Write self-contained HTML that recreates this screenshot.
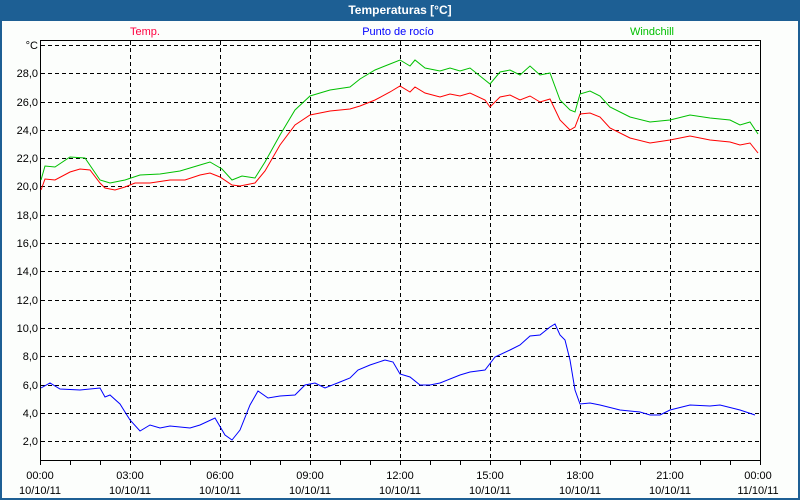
<!DOCTYPE html>
<html><head><meta charset="utf-8"><style>
html,body{margin:0;padding:0;width:800px;height:500px;overflow:hidden;background:#fcfefc;font-family:"Liberation Sans",sans-serif}
</style></head><body>
<svg width="800" height="500" xmlns="http://www.w3.org/2000/svg" style="position:absolute;left:0;top:0" font-family="Liberation Sans, sans-serif" font-size="11">
<rect x="0" y="0" width="800" height="500" fill="#1d5f94"/>
<rect x="2" y="21" width="796" height="477" fill="#fcfefc"/>
<text x="400" y="14" text-anchor="middle" fill="#fff" font-weight="bold" font-size="12">Temperaturas [°C]</text>
<text x="145" y="35" text-anchor="middle" fill="#ff0040">Temp.</text>
<text x="398" y="35" text-anchor="middle" fill="#0000ff">Punto de rocío</text>
<text x="652" y="35" text-anchor="middle" fill="#00c000">Windchill</text>
<g stroke="#000" stroke-dasharray="4,3" stroke-width="1">
<line x1="41" y1="45.5" x2="760" y2="45.5"/>
<line x1="41" y1="73.5" x2="760" y2="73.5"/><line x1="41" y1="102.5" x2="760" y2="102.5"/><line x1="41" y1="130.5" x2="760" y2="130.5"/><line x1="41" y1="158.5" x2="760" y2="158.5"/><line x1="41" y1="186.5" x2="760" y2="186.5"/><line x1="41" y1="215.5" x2="760" y2="215.5"/><line x1="41" y1="243.5" x2="760" y2="243.5"/><line x1="41" y1="271.5" x2="760" y2="271.5"/><line x1="41" y1="300.5" x2="760" y2="300.5"/><line x1="41" y1="328.5" x2="760" y2="328.5"/><line x1="41" y1="356.5" x2="760" y2="356.5"/><line x1="41" y1="385.5" x2="760" y2="385.5"/><line x1="41" y1="413.5" x2="760" y2="413.5"/><line x1="41" y1="441.5" x2="760" y2="441.5"/>
<line x1="130.5" y1="41" x2="130.5" y2="460"/><line x1="220.5" y1="41" x2="220.5" y2="460"/><line x1="310.5" y1="41" x2="310.5" y2="460"/><line x1="400.5" y1="41" x2="400.5" y2="460"/><line x1="490.5" y1="41" x2="490.5" y2="460"/><line x1="580.5" y1="41" x2="580.5" y2="460"/><line x1="670.5" y1="41" x2="670.5" y2="460"/>
</g>
<rect x="40.5" y="40.5" width="720" height="420" fill="none" stroke="#000"/>
<g stroke="#000">
<path d="M70.5 460v5M100.5 460v5M130.5 460v5M160.5 460v5M190.5 460v5M220.5 460v5M250.5 460v5M280.5 460v5M310.5 460v5M340.5 460v5M370.5 460v5M400.5 460v5M430.5 460v5M460.5 460v5M490.5 460v5M520.5 460v5M550.5 460v5M580.5 460v5M610.5 460v5M640.5 460v5M670.5 460v5M700.5 460v5M730.5 460v5M760.5 460v5M40.5 460v5"/>
</g>
<g fill="#000" text-anchor="end">
<text x="38" y="49">°C</text><text x="38" y="77">28,0</text><text x="38" y="106">26,0</text><text x="38" y="134">24,0</text><text x="38" y="162">22,0</text><text x="38" y="190">20,0</text><text x="38" y="219">18,0</text><text x="38" y="247">16,0</text><text x="38" y="275">14,0</text><text x="38" y="304">12,0</text><text x="38" y="332">10,0</text><text x="38" y="360">8,0</text><text x="38" y="389">6,0</text><text x="38" y="417">4,0</text><text x="38" y="445">2,0</text>
</g>
<g fill="#000" text-anchor="middle">
<text x="40" y="479">00:00</text><text x="40" y="494">10/10/11</text>
<text x="130" y="479">03:00</text><text x="130" y="494">10/10/11</text>
<text x="220" y="479">06:00</text><text x="220" y="494">10/10/11</text>
<text x="310" y="479">09:00</text><text x="310" y="494">10/10/11</text>
<text x="400" y="479">12:00</text><text x="400" y="494">10/10/11</text>
<text x="490" y="479">15:00</text><text x="490" y="494">10/10/11</text>
<text x="580" y="479">18:00</text><text x="580" y="494">10/10/11</text>
<text x="670" y="479">21:00</text><text x="670" y="494">10/10/11</text>
<text x="758" y="479">00:00</text><text x="758" y="494">11/10/11</text>
</g>
<g fill="none" stroke-width="1">
<polyline stroke="#00c000" points="41,180 45,166 55,167 70,157 85,158 100,180 110,183 125,180 140,175 160,174 180,171 200,165 210,162 222,169 232,180 242,176 255,178 265,162 280,135 295,110 310,96 330,90 350,87 360,79 375,70 390,64 400,60 410,66 415,60 425,68 440,71 450,68 460,71 470,68 485,80 490,84 500,72 510,70 520,75 530,66 540,75 550,73 560,100 570,110 575,112 580,94 590,91 600,96 610,107 630,117 650,122 670,120 690,115 710,118 730,120 740,125 750,122 758,134"/>
<polyline stroke="#ff0000" points="41,190 45,179 55,180 70,172 80,169 90,170 100,183 105,188 115,190 125,187 135,183 150,183 170,180 185,180 200,175 210,173 220,177 232,185 240,186 255,183 265,171 280,145 295,125 310,115 330,111 350,109 360,106 375,100 390,92 400,86 410,92 415,87 425,93 440,97 450,94 460,96 470,93 485,100 490,107 500,97 510,95 520,100 530,96 540,102 550,99 560,120 570,130 575,127 580,114 590,113 600,117 610,128 630,138 650,143 670,140 690,136 710,140 730,142 740,145 750,143 758,153"/>
<polyline stroke="#0000ff" points="41,388 50,383 60,389 80,390 100,388 105,397 110,395 120,404 130,420 140,431 150,425 160,428 170,426 190,428 200,425 215,418 225,435 232,440 240,430 250,405 258,391 268,398 280,396 295,395 305,385 315,383 325,388 340,382 350,378 358,370 370,365 385,360 393,362 400,374 410,377 420,385 430,385 440,383 460,375 470,372 485,370 495,357 510,350 520,345 530,336 540,335 550,327 555,324 560,335 565,340 570,360 575,390 580,404 590,403 600,405 620,410 640,412 650,415 660,415 670,410 690,405 710,406 720,405 740,410 755,415"/>
</g>
</svg>
</body></html>
